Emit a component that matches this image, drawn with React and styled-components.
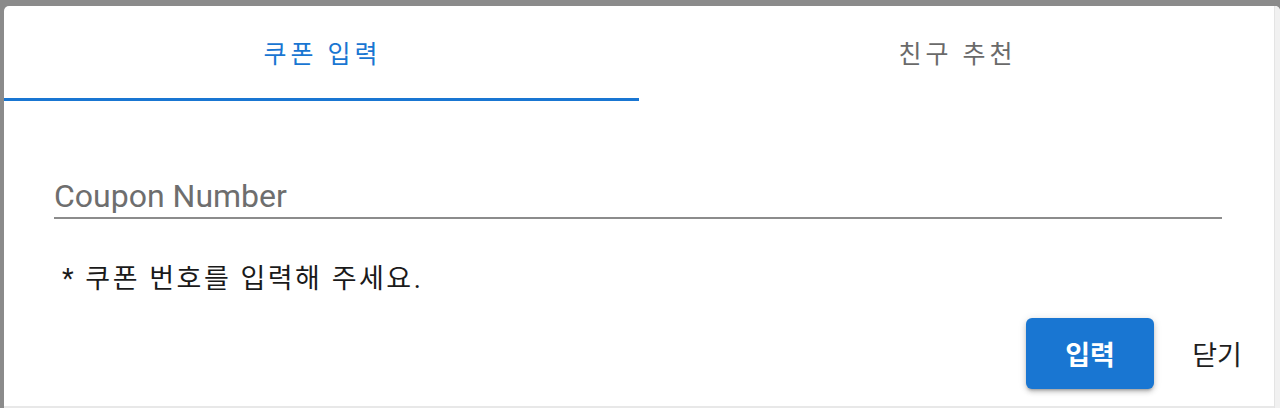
import React, { useState } from 'react';
import styled, { createGlobalStyle } from 'styled-components';

const GlobalStyle = createGlobalStyle`
  html, body {
    margin: 0;
    padding: 0;
    background: #8b8b8b;
    overflow: hidden;
  }
  * { box-sizing: border-box; }
`;

const KR = `Roboto, "Noto Sans CJK KR", "Noto Sans", sans-serif`;

const Backdrop = styled.div`
  width: 1280px;
  height: 408px;
  padding: 6px 0 0 4px;
  display: flex;
`;

const Dialog = styled.div`
  flex: 1;
  display: flex;
  background: #fff;
  border-top-left-radius: 5px;
  border-top-right-radius: 5px;
  overflow: hidden;
`;

const Panel = styled.div`
  flex: 1;
  display: flex;
  flex-direction: column;
  border-bottom: 2px solid #e8e8e8;
`;

const Track = styled.div`
  width: 6px;
  background: #f1f1f1;
  border-left: 1px solid #e4e4e4;
`;

const Tabs = styled.div`
  display: grid;
  grid-template-columns: 1fr 1fr;
  height: 95px;
`;

const Tab = styled.button`
  border: none;
  background: none;
  font-family: ${KR};
  font-size: 25px;
  letter-spacing: 4px;
  font-weight: 400;
  color: ${p => (p.$active ? '#1976d2' : '#6a6a6a')};
  border-bottom: 3px solid ${p => (p.$active ? '#1976d2' : 'transparent')};
  cursor: pointer;
  padding: 0 0 0 2px;
`;

const Content = styled.div`
  padding: 76px 52px 0 50px;
`;

const Input = styled.input`
  width: 100%;
  height: 42px;
  border: none;
  border-bottom: 2px solid #8c8c8c;
  outline: none;
  font-family: Roboto, "Noto Sans", sans-serif;
  font-size: 32px;
  color: #222;
  padding: 0 0 3px 0;

  &::placeholder {
    color: #6e6e6e;
  }
`;

const Helper = styled.p`
  margin: 43px 0 0 58px;
  font-family: ${KR};
  font-size: 27px;
  letter-spacing: 2.5px;
  line-height: 34px;
  color: #1a1a1a;
`;

const Actions = styled.div`
  display: flex;
  justify-content: flex-end;
  align-items: center;
  gap: 12px;
  padding: 0 6px 0 0;
  margin-top: 22px;
`;

const Button = styled.button`
  border: none;
  font-family: ${KR};
  font-size: 27px;
  border-radius: 6px;
  height: 71px;
  cursor: pointer;
  ${p =>
    p.$primary
      ? `
    width: 128px;
    background: #1976d2;
    color: #fff;
    font-weight: 700;
    box-shadow: 0 3px 3px -2px rgba(0,0,0,0.25), 0 3px 5px 0 rgba(0,0,0,0.16), 0 1px 8px 0 rgba(0,0,0,0.12);
  `
      : `
    width: 102px;
    background: transparent;
    color: #1f1f1f;
    font-weight: 400;
  `}
`;

export default function App() {
  const [tab, setTab] = useState(0);
  return (
    <>
      <GlobalStyle />
      <Backdrop>
        <Dialog>
          <Panel>
            <Tabs>
              <Tab $active={tab === 0} onClick={() => setTab(0)}>쿠폰 입력</Tab>
              <Tab $active={tab === 1} onClick={() => setTab(1)}>친구 추천</Tab>
            </Tabs>
            <Content>
              <Input placeholder="Coupon Number" />
            </Content>
            <Helper>* 쿠폰 번호를 입력해 주세요.</Helper>
            <Actions>
              <Button $primary>입력</Button>
              <Button>닫기</Button>
            </Actions>
          </Panel>
          <Track />
        </Dialog>
      </Backdrop>
    </>
  );
}
